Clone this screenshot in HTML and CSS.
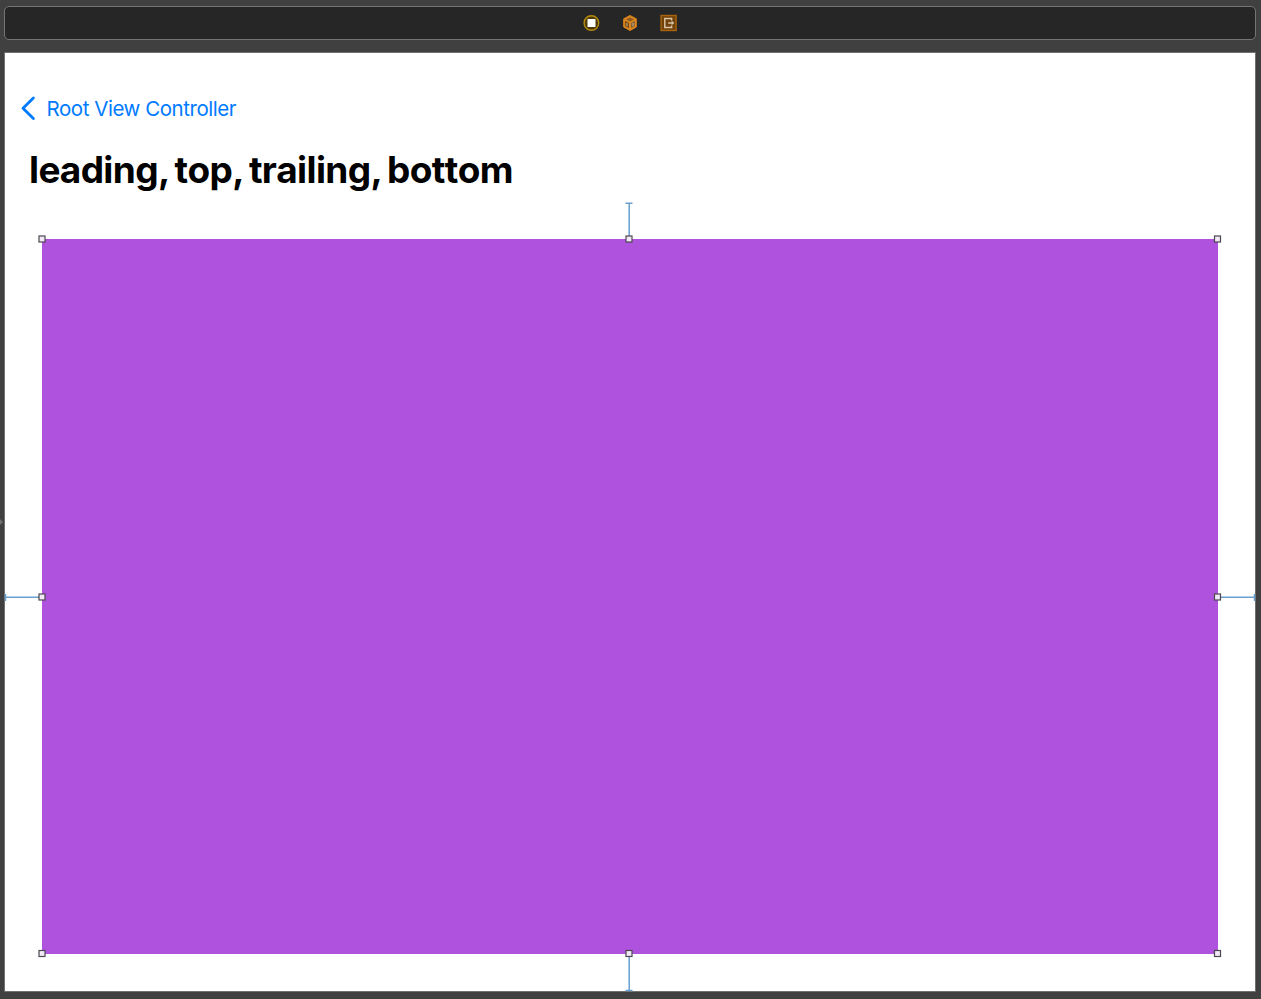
FILE: index.html
```html
<!DOCTYPE html>
<html lang="en">
<head>
<meta charset="utf-8">
<title>Storyboard</title>
<link rel="stylesheet" href="styles.css">
</head>
<body>
<header class="dock">
  <svg class="dock-icon" viewBox="0 0 18 18"><circle cx="9.4" cy="9" r="7.3" fill="#4d3b05" stroke="#b98b0c" stroke-width="1.4"/><rect x="5.5" y="5" width="8" height="8" fill="#fff"/></svg>
  <svg class="dock-icon" viewBox="0 0 18 18"><path d="M9 1.5 15.3 4.8V13L9 16.5 2.7 13V4.8Z" fill="#d9841c" stroke="#d9841c" stroke-width="1" stroke-linejoin="round"/><path d="M5 5.5 9 3.6l4 1.9-4 1.9Z" fill="#8a5a20"/><path d="M4.2 7v5l3.8 2V8.9Z" fill="#704716"/><path d="M10 8.9V14l3.8-2V7Z" fill="#80613a"/><path d="M6 8.9v3.2M12 8.9v3" stroke="#c4a678" stroke-width="1.2"/></svg>
  <svg class="dock-icon" viewBox="-0.6 0 18 18"><rect x="1.5" y="1.5" width="15" height="15" fill="#704109" stroke="#ab640d" stroke-width="1.4"/><path d="M12 6.4V4.5H5.2v9H12v-1.9M8.5 9h5" fill="none" stroke="#d8c4a8" stroke-width="1.5"/><path d="M12 6.8 14.8 9 12 11.2Z" fill="#d8c4a8"/></svg>
</header>
<main class="scene">
  <nav class="back">
    <svg class="chevron" viewBox="0 0 16 26"><path d="M13.4 3 3 13.3 13.4 23.6" fill="none" stroke="#007aff" stroke-width="2.8" stroke-linecap="round" stroke-linejoin="round"/></svg>
    <span class="back-label">Root View Controller</span>
  </nav>
  <h1 class="title">leading, top, trailing, bottom</h1>
  <div class="purple-view"></div>
  <svg class="selection" viewBox="4 52 1252 940">
    <defs><g id="handle"><rect x="-3" y="-3" width="6" height="6" fill="#f2e8f8" stroke="#4b4850" stroke-width="1.2"/></g></defs>
    <g fill="none" stroke="#6a9fd0" stroke-width="1.5">
      <path d="M625.5 203.2h7M629.2 203v36M629.2 954v37M625.5 990.5h7"/>
      <path d="M5 597.3h37M5.5 594v7M1218 597.3h37M1254.5 594v7"/>
    </g>
    <use href="#handle" x="42" y="239"/><use href="#handle" x="629" y="239"/><use href="#handle" x="1217.5" y="239"/>
    <use href="#handle" x="42" y="597"/><use href="#handle" x="1217.5" y="597"/>
    <use href="#handle" x="42" y="953.5"/><use href="#handle" x="629" y="953.5"/><use href="#handle" x="1217.5" y="953.5"/>
  </svg>
</main>
<svg class="edge-mark" viewBox="0 0 3 6"><path d="M0 0 3 3 0 6Z" fill="#707070"/></svg>
</body>
</html>
```
FILE: styles.css
```css
* { box-sizing: border-box; }
body {
  margin: 0;
  height: 999px;
  padding: 6px 5px 7px 4px;
  display: flex;
  flex-direction: column;
  gap: 12px;
  overflow: hidden;
  background: #404040;
  font-family: Inter, "Liberation Sans", sans-serif;
}
.dock {
  height: 34px;
  padding-right: 0.5px;
  display: flex;
  justify-content: center;
  align-items: center;
  gap: 20.7px;
  background: #262626;
  border: 1px solid #757575;
  border-radius: 5px;
}
.dock-icon { width: 18px; height: 18px; }
.scene {
  position: relative;
  height: 940px;
  padding: 42px 37px 37px;
  display: flex;
  flex-direction: column;
  background: #fff;
  border: 1px solid #707070;
}
.back {
  height: 26px;
  margin-left: -22px;
  display: flex;
  align-items: center;
  gap: 10.5px;
  color: #007aff;
}
.chevron { width: 16px; height: 26px; }
.back-label {
  padding-top: 2px;
  font-size: 20.5px;
  line-height: 26px;
  letter-spacing: -0.45px;
  white-space: nowrap;
}
.title {
  height: 48px;
  margin: 25px 0 45px -13px;
  font-size: 37px;
  line-height: 48px;
  font-weight: 700;
  font-kerning: none;
  letter-spacing: -0.63px;
  word-spacing: -3.2px;
  color: #000;
  white-space: nowrap;
}
.purple-view { flex: 1; background: #af52de; }
.selection {
  position: absolute;
  left: -1px;
  top: -1px;
  width: 1252px;
  height: 940px;
}
.edge-mark { position: absolute; left: 0; top: 519px; width: 3px; height: 6px; }
```
